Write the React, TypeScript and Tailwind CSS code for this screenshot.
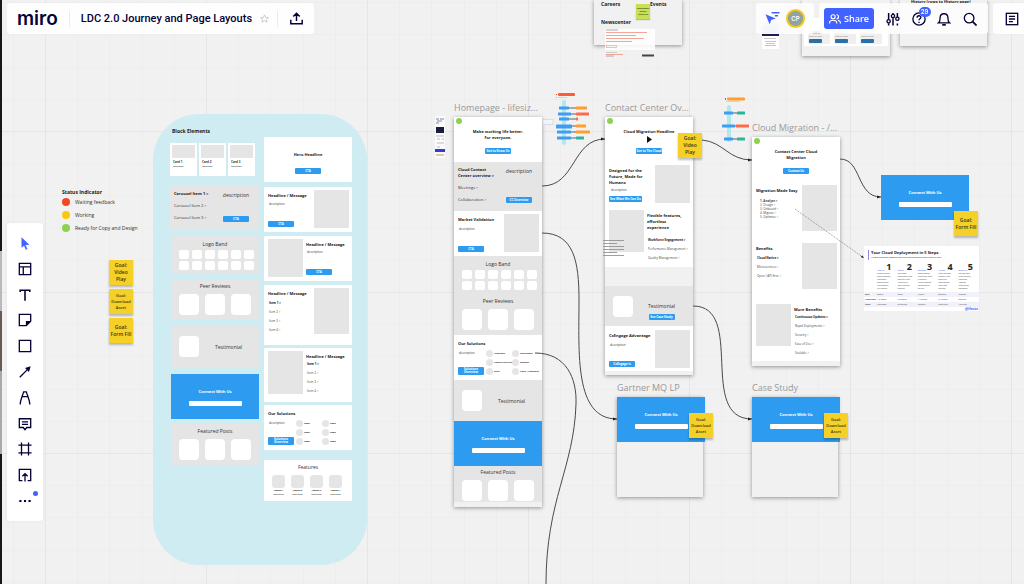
import type { ReactNode } from "react"
import clsx from "clsx"

type BoxProps = { className?: string; children?: ReactNode }

/* ---------- Board primitives ---------- */

function Cta({ children, className }: BoxProps) {
  return (
    <button
      className={clsx(
        "flex min-h-[6px] min-w-[26px] shrink-0 items-center justify-center rounded-[1px] bg-[#2d9bf0] px-px text-center text-[3px] leading-[4px] font-bold whitespace-nowrap text-white",
        className
      )}
    >
      {children}
    </button>
  )
}

function Media({ className }: BoxProps) {
  return <div className={clsx("w-[35px] shrink-0 bg-[#e5e5e5]", className)} />
}

function Title({ children, className }: BoxProps) {
  return <h3 className={clsx("text-[4px] leading-[6px] font-bold text-[#1a1a1a]", className)}>{children}</h3>
}

function Caption({ children, className }: BoxProps) {
  return <p className={clsx("text-[5px] leading-[6px] whitespace-nowrap text-[#333]", className)}>{children}</p>
}

function Tiny({ children, className }: BoxProps) {
  return <p className={clsx("text-[3px] leading-[4px] whitespace-nowrap text-[#333]", className)}>{children}</p>
}

function Items({ items }: { items: string[] }) {
  return (
    <ul className="flex flex-col gap-[5px] pl-px text-[3px] leading-[4px] whitespace-nowrap text-[#444]">
      {items.map((item, i) => (
        <li key={item} className={i === 0 ? "font-bold text-[#1a1a1a]" : ""}>
          {item} &gt;
        </li>
      ))}
    </ul>
  )
}

function Sticky({ children, className }: BoxProps) {
  return (
    <div
      className={clsx(
        "flex h-[25px] w-6 items-center justify-center bg-[#f5d128] text-center font-semibold whitespace-pre-line text-[#3b3413] shadow-[0_2px_2px_rgba(0,0,0,0.25)]",
        className
      )}
    >
      {children}
    </div>
  )
}

/* ---------- Wireframe blocks ---------- */

function Hero({ title, cta, className }: { title: string; cta: string; className?: string }) {
  return (
    <section className={clsx("flex h-[45px] flex-col items-center bg-white", className)}>
      <Title className="text-center whitespace-pre-line">{title}</Title>
      <Cta className="mt-auto mb-2">{cta}</Cta>
    </section>
  )
}

function Carousel({ first, rest, cta, className }: { first: string; rest: string[]; cta: string; className?: string }) {
  return (
    <section className={clsx("flex justify-between bg-[#e5e5e5] pr-[10px] pl-1", className)}>
      <div className="flex flex-col gap-[6px] text-[4px] leading-[6px] whitespace-pre text-[#333]">
        <p className="font-bold text-[#1a1a1a]">{first} &gt;</p>
        {rest.map((r) => (
          <p key={r}>{r} &gt;</p>
        ))}
      </div>
      <div className="flex flex-col items-center justify-between pt-px pb-2">
        <Caption>description</Caption>
        <Cta>{cta}</Cta>
      </div>
    </section>
  )
}

function LogoBand({ className }: BoxProps) {
  return (
    <section className={clsx("bg-[#e5e5e5] px-2", className)}>
      <Caption className="text-center">Logo Band</Caption>
      <div className="mt-[3px] grid grid-cols-[repeat(6,10px)] gap-x-[3px] gap-y-[2px]">
        {Array.from({ length: 12 }, (_, i) => (
          <div key={i} className="h-[9px] rounded-[2px] bg-white" />
        ))}
      </div>
    </section>
  )
}

function Squares({ title, className }: { title: string; className?: string }) {
  return (
    <section className={clsx("bg-[#e5e5e5] px-2", className)}>
      <Caption className="text-center">{title}</Caption>
      <div className="mt-[5px] flex gap-[6px]">
        {[0, 1, 2].map((i) => (
          <div key={i} className="h-[21px] w-5 rounded-[4px] bg-white" />
        ))}
      </div>
    </section>
  )
}

function Testimonial({ cta, className }: { cta?: string; className?: string }) {
  return (
    <section className={clsx("flex items-center bg-[#e5e5e5] pl-2", cta ? "pr-[18px]" : "pr-[17px]", className)}>
      <div className="h-[21px] w-5 rounded-[4px] bg-white" />
      <div className={clsx("ml-auto flex flex-col items-center gap-[5px]", cta && "pt-[10px]")}>
        <Caption>Testimonial</Caption>
        {cta && <Cta>{cta}</Cta>}
      </div>
    </section>
  )
}

function Connect({ className }: BoxProps) {
  return (
    <section className={clsx("flex h-[45px] w-[88px] flex-col items-center bg-[#2d9bf0] pt-[15px]", className)}>
      <h3 className="text-[4px] leading-[6px] font-bold text-white">Connect With Us</h3>
      <input aria-label="Connect With Us" className="mt-[6px] h-[5px] w-[53px] rounded-[1px] bg-white text-[3px]" />
    </section>
  )
}

type SplitProps = BoxProps & { reverse?: boolean; title: string; media: string }

// Copy on one side, grey media on the other
function Split({ reverse, title, media, className, children }: SplitProps) {
  return (
    <section className={clsx("flex justify-between bg-white pr-[3px] pl-1", className)}>
      {reverse && <Media className={media} />}
      <div className={clsx("flex w-[46px] flex-col items-start pt-[3px]", reverse && "pl-[3px]")}>
        <Title className="whitespace-pre">{title}</Title>
        {children}
      </div>
      {!reverse && <Media className={media} />}
    </section>
  )
}

function Solutions({ labels, className }: { labels: string[]; className?: string }) {
  return (
    <section className={clsx("flex h-[45px] flex-col bg-white px-1 pt-[6px]", className)}>
      <Title>Our Solutions</Title>
      <div className="flex gap-[2px]">
        <div className="flex w-[26px] flex-col justify-between pt-1">
          <Tiny className="pl-px">description</Tiny>
          <Cta className="h-2">
            <span className="leading-[3px] whitespace-pre-line">{"Solutions\nOverview"}</span>
          </Cta>
        </div>
        <ul className="grid grid-cols-2 gap-y-[2px] pt-[3px] text-[2px] leading-[7px] font-bold text-[#222]">
          {labels.map((l, i) => (
            <li key={i} className="flex w-[26px] gap-px whitespace-nowrap">
              <span className="size-[7px] shrink-0 rounded-full bg-[#e5e5e5]" />
              {l}
            </li>
          ))}
        </ul>
      </div>
    </section>
  )
}

function Frame({ name, dot, className, children }: BoxProps & { name: string; dot?: boolean }) {
  return (
    <article className={clsx("absolute bg-[#f1f1f1] shadow-[0_1px_4px_rgba(0,0,0,0.4)]", className)}>
      <h2 className="absolute -top-4 left-0 text-[9px] leading-[14px] whitespace-nowrap text-[#999]">{name}</h2>
      {children}
      {dot && <span className="absolute top-px left-[2px] size-[6px] rounded-full bg-[#8fd14f]" />}
    </article>
  )
}

/* ---------- Board content ---------- */

function BlockLibrary() {
  const items = ["Item 1", "Item 2", "Item 3", "Item 4"]
  return (
    <div className="absolute top-[114px] left-[153px] h-[451px] w-[214px] rounded-[46px] bg-[#cfecf2] px-[18px] pt-[14px]">
      <h2 className="pl-px text-[5px] leading-[6px] font-bold text-[#1a1a1a]">Block Elements</h2>
      <div className="flex gap-[5px]">
        <div className="flex w-[88px] flex-col pt-[9px]">
          <div className="-ml-px flex gap-[2px]">
            {[1, 2, 3].map((n) => (
              <div key={n} className="h-[33px] w-[27px] bg-white p-[2px]">
                <div className="h-[13px] bg-[#e5e5e5]" />
                <Tiny className="mt-[2px] pl-px font-bold">Card {n}</Tiny>
                <p className="pl-px text-[2px] leading-[6px]">description</p>
              </div>
            ))}
          </div>
          <Carousel className="mt-[10px] -ml-px h-[44px] pt-[5px]" first="Carousel Item 1" rest={["Carousel Item 2", "Carousel Item 3"]} cta="CTA" />
          <LogoBand className="mt-[6px] h-[38px] pt-[5px]" />
          <Squares className="mt-[5px] h-[41px] pt-1" title="Peer Reviews" />
          <Testimonial className="mt-[6px] h-[41px]" />
          <Connect className="mt-[7px]" />
          <Squares className="mt-[5px] h-[41px] pt-1" title="Featured Posts" />
        </div>

        <div className="flex w-[88px] flex-col pt-[3px]">
          <Hero className="pt-[15px]" title="Hero Headline" cta="CTA" />
          <Split className="mt-[5px] h-[45px] pt-[3px]" title="Headline / Message" media="h-[38px]">
            <Tiny className="mt-[3px] pl-px">description</Tiny>
            <Cta className="mt-[15px]">CTA</Cta>
          </Split>
          <Split reverse className="mt-[4px] h-[45px] pt-[3px]" title="Headline / Message" media="h-[38px]">
            <Tiny className="mt-[2px] pl-px">description</Tiny>
            <Cta className="mt-[15px]">CTA</Cta>
          </Split>
          <Split className="mt-[4px] h-[60px] pt-[3px]" title="Headline / Message" media="h-[46px]">
            <div className="mt-1">
              <Items items={items} />
            </div>
          </Split>
          <Split reverse className="mt-[3px] h-[54px] pt-[3px]" title="Headline / Message" media="h-[43px]">
            <div className="mt-[2px]">
              <Items items={items} />
            </div>
          </Split>
          <Solutions className="mt-[3px]" labels={["Name", "Name", "Name", "Name", "Name", "Name"]} />
          <section className="mt-[10px] h-[41px] bg-white px-2 pt-1">
            <Caption className="text-center">Features</Caption>
            <div className="mt-[5px] flex gap-[6px] text-center text-[2px] leading-[4px]">
              {[1, 2, 3, 4].map((n) => (
                <div key={n} className="w-[13px]">
                  <div className="h-[13px] rounded-[3px] bg-[#e5e5e5]" />
                  <p className="pt-px font-bold">Feature {n}</p>
                  <p>description</p>
                </div>
              ))}
            </div>
          </section>
        </div>
      </div>
    </div>
  )
}

const statuses = [
  { label: "Waiting feedback", color: "bg-[#f24726]" },
  { label: "Working", color: "bg-[#fac710]" },
  { label: "Ready for Copy and Design", color: "bg-[#8fd14f]" },
]

function Legend() {
  return (
    <>
      <div className="absolute top-[188px] left-[62px] text-[5px] leading-[8px] whitespace-nowrap text-[#333]">
        <h2 className="font-bold text-[#1a1a1a]">Status Indicator</h2>
        <ul className="mt-[2px] flex flex-col gap-[5px]">
          {statuses.map((s) => (
            <li key={s.label} className="flex items-center gap-[5px]">
              <span className={clsx("size-2 rounded-full", s.color)} />
              {s.label}
            </li>
          ))}
        </ul>
      </div>
      <div className="absolute top-[260px] left-[109px] flex flex-col gap-[4px]">
        <Sticky className="text-[5px] leading-[7px]">{"Goal:\nVideo\nPlay"}</Sticky>
        <Sticky className="text-[4px] leading-[6px]">{"Goal:\nDownload\nAsset"}</Sticky>
        <Sticky className="text-[5px] leading-[7px]">{"Goal:\nForm Fill"}</Sticky>
      </div>
    </>
  )
}

function HomepageFrame() {
  return (
    <Frame name="Homepage - lifesiz..." dot className="top-[117px] left-[454px] w-[88px] pb-[5px]">
      <Hero className="pt-[12px]" title={"Make working life better.\nFor everyone."} cta="Get to Know Us" />
      <Carousel
        className="h-[49px] pt-[5px]"
        first={"Cloud Contact\nCenter overview"}
        rest={["Meetings", "Collaboration"]}
        cta="CC Overview"
      />
      <Split className="h-[45px] pt-[3px]" title="Market Validation" media="h-[38px]">
        <Tiny className="mt-[4px] pl-px">description</Tiny>
        <Cta className="mt-[15px]">CTA</Cta>
      </Split>
      <LogoBand className="h-[40px] pt-[5px]" />
      <Squares className="h-[39px] pt-[2px]" title="Peer Reviews" />
      <Solutions labels={["Healthcare", "Government", "Financial Services", "Software", "Retail", "Travel / Hospitality"]} />
      <Testimonial className="h-[41px]" />
      <Connect />
      <Squares className="h-[36px] pt-[3px]" title="Featured Posts" />
    </Frame>
  )
}

function ContactCenterFrame() {
  return (
    <Frame name="Contact Center Ov..." dot className="top-[117px] left-[605px] w-[88px] pb-[4px]">
      <section className="flex h-[43px] flex-col items-center bg-white pt-[12px]">
        <Title>Cloud Migration Headline</Title>
        <svg className="mt-px h-[7px] w-[5px]" viewBox="0 0 5 7">
          <path d="M0 0 L5 3.5 L0 7 Z" fill="#111" />
        </svg>
        <Cta className="mt-[5px]">Get to The Cloud</Cta>
      </section>
      <Split className="h-[47px] pt-[5px]" title={"Designed for the\nFuture, Made for\nHumans"} media="h-[38px]">
        <Tiny className="mt-[2px] pl-[2px]">description</Tiny>
        <Cta className="mt-[4px]">See What We Can Do</Cta>
      </Split>
      <Split reverse className="h-[60px] pt-[3px]" title={"Flexible features,\neffortless\nexperience"} media="h-[42px]">
        <div className="mt-[7px]">
          <Items items={["Workforce Engagement", "Performance Management", "Quality Management"]} />
        </div>
      </Split>
      <Testimonial className="mt-[19px] h-[40px]" cta="See Case Study" />
      <Split className="h-[45px] pt-[4px]" title="CxEngage Advantage" media="h-[38px]">
        <Tiny className="mt-[4px] pl-px">description</Tiny>
        <Cta className="mt-[14px]">CxEngage is</Cta>
      </Split>
    </Frame>
  )
}

function CloudMigrationFrame() {
  return (
    <Frame name="Cloud Migration - /..." dot className="top-[137px] left-[752px] w-[88px] pb-[5px]">
      <Hero className="pt-[12px]" title={"Contact Center Cloud\nMigration"} cta="Contact Us" />
      <Split className="h-[54px] pt-[3px]" title="Migration Made Easy" media="h-[46px]">
        <ol className="mt-[5px] list-inside list-decimal pl-1 text-[3px] leading-[4px] text-[#444]">
          <li className="font-bold">Analyze &gt;</li>
          <li>Design &gt;</li>
          <li>Onboard &gt;</li>
          <li>Migrate &gt;</li>
          <li>Optimize &gt;</li>
        </ol>
      </Split>
      <Split className="h-[63px] pt-[7px]" title="Benefits" media="h-[46px]">
        <div className="mt-1">
          <Items items={["Cloud Native", "Microservices", "Open / API-first"]} />
        </div>
      </Split>
      <Split reverse className="h-[62px] pt-[5px]" title="More Benefits" media="h-[42px]">
        <div className="mt-[2px]">
          <Items items={["Continuous Updates", "Rapid Deployments", "Security", "Ease of Use", "Scalable"]} />
        </div>
      </Split>
    </Frame>
  )
}

const steps = [
  ["Analyze", "Record needs", "Requirements", "Processes", "Define goals", "Pick owners", "Next steps"],
  ["Design", "Call flows", "Integration plan", "Routing rules", "Agent skills", "User training", "Reports"],
  ["Onboard", "Setup tenant", "Users and roles", "Numbers", "Agent desktop", "Connections", "Go-live"],
  ["Migrate", "Move queues", "Cutover plan", "Test calls", "Data import", "Port lines", "Sign-off"],
  ["Optimize", "Review data", "Tune routing", "Coaching", "Insights", "Scale seats", "Roadmap"],
]

const stepRows = [
  ["Role", "Owner", "Team", "Admin", "Engineer", "Support"],
  ["Timeframe", "1-2 weeks", "2-3 weeks", "1-2 weeks", "3-4 weeks", "Ongoing"],
  ["Tools", "Workshop", "Blueprints", "Console", "Test plans", "Analytics"],
]

function StepsSlide() {
  return (
    <section className="absolute top-[246px] left-[864px] w-[115px] bg-white pt-1 text-[2px] leading-[3px] text-[#444]">
      <div className="ml-1 border-l border-[#8a8de8] pl-[2px]">
        <h3 className="text-[4px] leading-[6px] font-bold text-[#1a1a1a]">Your Cloud Deployment in 5 Steps</h3>
        <p className="leading-[4px] font-semibold">A cloud migration roadmap with clear deliverables at every point in time</p>
      </div>
      <div className="mt-[2px] ml-[13px] grid grid-cols-5">
        {steps.map(([name, ...lines], i) => (
          <div key={name} className="whitespace-nowrap">
            <div className="flex h-[10px] items-end justify-between pr-[6px]">
              <span className="text-[#4b5be8]">{name}</span>
              <span className="text-[9px] leading-[10px] font-bold text-[#222]">{i + 1}</span>
            </div>
            {lines.map((l) => (
              <p key={l}>{l}</p>
            ))}
          </div>
        ))}
      </div>
      <table className="mt-[2px] w-full table-fixed text-left">
        <tbody>
          {stepRows.map(([head, ...cells]) => (
            <tr key={head} className="h-[5px] odd:bg-[#f1f1fa]">
              <th className="w-[13px] pl-px font-bold">{head}</th>
              {cells.map((c) => (
                <td key={c}>{c}</td>
              ))}
            </tr>
          ))}
        </tbody>
      </table>
      <p className="pr-px text-right text-[3px] leading-[4px] font-bold text-[#4262ff]">@lifesize</p>
    </section>
  )
}

// Small site map thumbnails
function MiniMaps() {
  const left = [
    { y: 108, x: 559, w: 10, c: "#ff9d2e", r: 11 },
    { y: 114, x: 558, w: 13, c: "#ff6a4d", r: 13 },
    { y: 119, x: 559, w: 10, c: "#ff6a4d", r: 2 },
    { y: 126, x: 556, w: 16, c: "#ff9d2e", r: 10 },
    { y: 132, x: 557, w: 14, c: "#ff9d2e", r: 14 },
    { y: 138, x: 557, w: 14, c: "#2bb59a", r: 8 },
  ]
  const right = [
    { y: 113, x: 724, w: 9, c: "#2bb59a", r: 8 },
    { y: 126, x: 722, w: 13, c: "#ff6a4d", r: 13 },
    { y: 139, x: 724, w: 9, c: "#2bb59a", r: 8 },
  ]
  return (
    <g>
      <rect x="558" y="93" width="17" height="3" rx="1" fill="#ff5a3c" />
      <rect x="556" y="94" width="1" height="1" fill="#f24726" />
      <rect x="556" y="97" width="1" height="1" fill="#8fd14f" />
      <rect x="558" y="97" width="9" height="1" fill="#b7dde6" />
      <rect x="562" y="100" width="4" height="45" rx="2" fill="#b3e7ee" />
      {left.map((n) => (
        <g key={n.y}>
          <rect x={n.x} y={n.y - 1.5} width={n.w} height={n.y === 126 ? 4 : 3} rx="0.5" fill="#3d9df2" />
          <path d={`M${n.x + n.w} ${n.y} H576`} stroke="#222" strokeWidth="0.7" />
          <rect x="576" y={n.y - 1.5} width={n.r} height="3" rx="0.5" fill={n.c} />
        </g>
      ))}
      <rect x="543" y="119.5" width="10" height="5" fill="#f3f4f8" stroke="#ccd3e3" strokeWidth="0.7" />
      <rect x="727" y="97.5" width="18" height="3" rx="1" fill="#ff9d2e" />
      <rect x="725" y="98" width="1" height="2" fill="#f24726" />
      <rect x="726" y="101" width="14" height="1" fill="#b7dde6" />
      <rect x="727" y="105" width="4" height="37" rx="2" fill="#b3e7ee" />
      {right.map((n) => (
        <g key={n.y}>
          <rect x={n.x} y={n.y - 1.5} width={n.w} height="3" rx="0.5" fill="#3d9df2" />
          <path d={`M${n.x + n.w} ${n.y} H737`} stroke="#222" strokeWidth="0.7" />
          <rect x={n.r > 10 ? 736 : 737} y={n.y - 1.5} width={n.r} height="3" rx="0.5" fill={n.c} />
        </g>
      ))}
      {/* Full page thumbnail */}
      <rect x="435" y="116" width="10" height="42" fill="#fafafb" />
      <path d="M436 119h3m1 0h4m-7 2h5m-6 2h3" stroke="#7d86ad" strokeWidth="1" />
      <rect x="436" y="127" width="8" height="6" fill="#1b1b3a" />
      <path d="M436 136h8m-7 3h3m2 0h2m-7 4h7m-7 4h3" stroke="#bbb" strokeWidth="1" />
      <rect x="435" y="149" width="10" height="3" fill="#3b35e0" />
      <path d="M436 155h8" stroke="#b9a34d" strokeWidth="1" />
    </g>
  )
}

function Connectors() {
  return (
    <svg className="pointer-events-none absolute top-0 left-0" width="1024" height="584" fill="none">
      <defs>
        <marker id="tip" markerWidth="5" markerHeight="4" refX="4" refY="2" orient="auto">
          <path d="M0 0.5 L4 2 L0 3.5 Z" fill="#222" />
        </marker>
      </defs>
      <g stroke="#4a4a4a" strokeWidth="1">
        <path d="M542 186 C576 186 572 139 605 139" markerEnd="url(#tip)" />
        <path d="M542 233 C574 233 579 262 579 300 C579 352 574 419 617 419" markerEnd="url(#tip)" />
        <path d="M535 353 C566 353 577 378 576 404 C574 468 546 500 546 584" />
        <path d="M702 140 C724 142 728 160 752 160" markerEnd="url(#tip)" />
        <path d="M693 306 C746 306 697 419 752 419" markerEnd="url(#tip)" />
        <path d="M840 159 C862 159 856 197 881 197" markerEnd="url(#tip)" />
        <path d="M795 209 L864 258" stroke="#777" strokeDasharray="1 1" strokeWidth="0.8" markerEnd="url(#tip)" />
      </g>
      <path d="M603 240.5h21m-21 3h14m-14 3h21m-21 3h21m-21 3h14m-14 3h21" stroke="#888" strokeWidth="0.8" />
      <MiniMaps />
    </svg>
  )
}

function TopFrames() {
  return (
    <>
      <div className="absolute top-0 left-[594px] h-[45px] w-[88px] bg-[#f1f1f1] pl-[7px] text-[5px] leading-[8px] font-bold text-[#1a1a1a] shadow-[0_1px_4px_rgba(0,0,0,0.4)]">
        <div className="grid grid-cols-[49px_auto]">
          <span>Careers</span>
          <span>Events</span>
        </div>
        <p className="mt-[10px]">Newscenter</p>
      </div>
      <div className="absolute top-[4px] left-[636px] flex h-[15px] w-[14px] items-center bg-[#c9df56] text-center text-[2px] leading-[3px] font-bold text-[#3a4210] shadow-[0_1px_1px_rgba(0,0,0,0.25)]">
        Integrations places resources
      </div>
      <svg className="absolute top-[28px] left-[605px]" width="50" height="30" fill="none">
        <rect y="1" width="50" height="21" fill="#fff" fillOpacity="0.85" />
        <path d="M1 2h12m-12 26h8" stroke="#aaa" />
        <path d="M1 4.5h41M1 7.5h30M1 10.5h38M1 13.5h26M1 26.5h17" stroke="#f3a597" />
        <rect x="1.5" y="17.5" width="10" height="2" stroke="#f3a597" strokeWidth="0.7" />
        <path d="M1 24.5h11" stroke="#ccc" />
        <path d="M37 27.5h12" stroke="#444" strokeWidth="2" />
      </svg>

      <svg className="absolute top-[24px] left-[762px]" width="17" height="25" fill="none">
        <rect width="17" height="25" fill="#fff" />
        <rect width="17" height="10" fill="#c9cbdc" />
        <rect y="10" width="17" height="2" fill="#1d1f52" />
        <path d="M2 14.5h12m-11 3h11m-10 2h9m-10 2h11" stroke="#b5b5bd" strokeWidth="0.8" />
      </svg>

      <div className="absolute top-0 left-[802px] h-[56px] w-[88px] bg-[#f1f1f1] shadow-[0_1px_4px_rgba(0,0,0,0.4)]">
        <div className="mx-[2px] mt-[18px] flex h-[28px] items-end gap-1 bg-white px-1 pb-[2px]">
          {[0, 1, 2].map((i) => (
            <div key={i} className="h-[13px] w-[22px] bg-[#f1eeee] px-px pt-px text-[2px] leading-[3px] text-[#777]">
              Read the latest product news
              <div className="mt-px h-[4px] w-[13px] rounded-[1px] bg-[#2a6fa5]" />
            </div>
          ))}
        </div>
      </div>
      <div className="absolute top-0 left-[900px] h-[46px] w-[87px] bg-[#f1f1f1] pl-[11px] shadow-[0_1px_4px_rgba(0,0,0,0.4)]">
        <p className="text-[4px] leading-[4px] font-bold whitespace-nowrap text-[#1a1a1a]">History (rows to History page)</p>
      </div>
    </>
  )
}

function Board() {
  return (
    <main className="absolute inset-0 overflow-hidden bg-[#f1f1f1] font-['Open_Sans',sans-serif]">
      <svg className="absolute inset-0 size-full">
        <defs>
          <pattern id="grid" x="45" y="131" width="161" height="161" patternUnits="userSpaceOnUse">
            <path d="M32.5 0V161M64.5 0V161M97.5 0V161M129.5 0V161M0 32.5H161M0 64.5H161M0 97.5H161M0 129.5H161" stroke="#ededed" />
            <path d="M0.5 0V161M0 0.5H161" stroke="#e6e6e6" />
          </pattern>
        </defs>
        <rect width="100%" height="100%" fill="url(#grid)" />
      </svg>
      <TopFrames />
      <Legend />
      <BlockLibrary />
      <HomepageFrame />
      <ContactCenterFrame />
      <CloudMigrationFrame />
      <Frame name="Gartner MQ LP" className="top-[397px] left-[617px] h-[100px] w-[86px]">
        <Connect />
      </Frame>
      <Frame name="Case Study" className="top-[397px] left-[752px] h-[100px] w-[86px]">
        <Connect />
      </Frame>
      <Connect className="absolute top-[175px] left-[881px]" />
      <StepsSlide />
      <Connectors />
      <Sticky className="absolute top-[133px] left-[678px] text-[5px] leading-[7px]">{"Goal:\nVideo\nPlay"}</Sticky>
      <Sticky className="absolute top-[413px] left-[689px] text-[4px] leading-[6px]">{"Goal:\nDownload\nAsset"}</Sticky>
      <Sticky className="absolute top-[413px] left-[824px] text-[4px] leading-[6px]">{"Goal:\nDownload\nAsset"}</Sticky>
      <Sticky className="absolute top-[211px] left-[954px] text-[5px] leading-[7px]">{"Goal:\nForm Fill"}</Sticky>
    </main>
  )
}

/* ---------- Chrome ---------- */

function Glyph({ children, className }: BoxProps) {
  return (
    <svg className={clsx("shrink-0", className)} viewBox="0 0 16 16" fill="none" stroke="currentColor" strokeWidth="1.5">
      {children}
    </svg>
  )
}

function Header() {
  return (
    <header className="absolute top-[3px] right-0 left-[7px] flex justify-between font-['Inter',sans-serif] text-[#050038]">
      <div className="flex h-[31px] items-center rounded-[3px] bg-white/90 pr-[11px] pl-[10px]">
        <a href="#" className="text-[19px] leading-6 font-semibold">miro</a>
        <span className="mx-[11px] h-4 w-px bg-[#e9e9ee]" />
        <h1 className="font-['Roboto',sans-serif] text-[11px] leading-4 font-medium whitespace-nowrap">LDC 2.0 Journey and Page Layouts</h1>
        <button aria-label="Add to favourites" className="ml-2 text-[#c3c2cf]">
          <Glyph className="size-[9px]">
            <path d="M8 1.5 10 6.2 15 6.5 11.2 9.7 12.4 14.6 8 12 3.6 14.6 4.8 9.7 1 6.5 6 6.2Z" />
          </Glyph>
        </button>
        <span className="mr-3 ml-2 h-4 w-px bg-[#e9e9ee]" />
        <button aria-label="Export board">
          <Glyph className="size-[13px]">
            <path d="M1 9.5V14.5H15V9.5M8 11V1.5M4 5.5 8 1.5 12 5.5" strokeWidth="1.8" />
          </Glyph>
        </button>
      </div>

      <div className="flex h-[31px] gap-[5px]">
        <div className="flex w-[58px] items-center justify-between rounded-[3px] bg-white/80 px-[9px] backdrop-blur-[2px]">
          <button aria-label="Follow cursors" className="text-[#4262ff]">
            <Glyph className="size-[15px]">
              <path d="M0.5 3.5 11.5 8 6.5 9.5 5 14.5Z" fill="currentColor" stroke="none" />
              <path d="M7 1.8H15.5M10.5 5H14" />
            </Glyph>
          </button>
          <span className="flex size-[19px] items-center justify-center rounded-full border-2 border-[#f2c81f] bg-[#8fa3a0] text-[6px] font-semibold text-white">
            CP
          </span>
        </div>
        <div className="flex w-[169px] items-center rounded-[3px] bg-white/80 pr-[11px] pl-[5px] backdrop-blur-[2px]">
          <button className="flex h-[21px] w-[50px] items-center justify-center gap-[3px] rounded-[3px] bg-[#4262ff] font-['Open_Sans',sans-serif] text-[9px] font-semibold text-white">
            <Glyph className="size-3">
              <circle cx="5.5" cy="5" r="2.7" />
              <path d="M0.8 14V12.5C0.8 10.5 3 9.6 5.5 9.6S10.2 10.5 10.2 12.5V14M10 2.3A2.7 2.7 0 0 1 10 7.7M12 9.8C14 10.2 15.2 11 15.2 12.5V14" />
            </Glyph>
            Share
          </button>
          <div className="ml-3 flex flex-1 items-center justify-between">
            <button aria-label="Board settings">
              <Glyph className="size-[14px]">
                <path d="M3 1V8.5M3 13V15.5M8 1V2.5M8 7V15.5M13 1V8.5M13 13V15.5" strokeWidth="1.7" />
                <circle cx="3" cy="10.7" r="1.9" />
                <circle cx="8" cy="4.7" r="1.9" />
                <circle cx="13" cy="7.7" r="1.9" fill="white" />
              </Glyph>
            </button>
            <button aria-label="Help" className="relative">
              <Glyph className="size-[14px]">
                <circle cx="8" cy="8" r="7" />
                <path d="M5.8 6.5C5.8 3.5 10.2 3.7 10.2 6.2C10.2 7.8 8 7.8 8 9.5" />
                <path d="M8 11V12.7" />
              </Glyph>
              <span className="absolute -top-[5px] left-[7px] flex h-[10px] w-3 items-center justify-center rounded-full bg-[#4262ff] text-[6px] leading-none font-semibold text-white">
                29
              </span>
            </button>
            <button aria-label="Notifications">
              <Glyph className="size-[14px]">
                <path d="M1.5 12.5H14.5C13 11.5 12.5 10 12.5 7C12.5 4 10.8 2 8 2S3.5 4 3.5 7C3.5 10 3 11.5 1.5 12.5Z" />
                <path d="M6 14.7H10" strokeWidth="2" />
              </Glyph>
            </button>
            <button aria-label="Search">
              <Glyph className="size-[14px]">
                <circle cx="7" cy="7" r="5.5" />
                <path d="M11 11 15.5 15.5" strokeWidth="2" />
              </Glyph>
            </button>
          </div>
        </div>
        <div className="flex w-[31px] items-center rounded-l-[3px] bg-white/90 pl-3">
          <button aria-label="Notes">
            <Glyph className="size-[14px]">
              <rect x="1.5" y="1.5" width="13" height="13" />
              <path d="M4.5 5H11.5M4.5 8H11.5M4.5 11H9" />
            </Glyph>
          </button>
        </div>
      </div>
    </header>
  )
}

const tools = [
  { label: "Select", icon: <path d="M4 1.5 13 10 8.5 10.2 10.8 14.8 9 15.6 6.9 11 4 13.5Z" fill="#4262ff" stroke="none" /> },
  { label: "Templates", icon: <path d="M1.5 1.5H14.5V14.5H1.5ZM1.5 5.5H14.5M6 5.5V14.5" /> },
  { label: "Text", icon: <path d="M2.5 4.5V2.5H13.5V4.5M8 2.5V14.5" strokeWidth="1.8" /> },
  {
    label: "Sticky note",
    icon: (
      <>
        <path d="M1.5 1.5H14.5V9.5L9.5 14.5H1.5Z" />
        <path d="M9 9H15L9 15Z" fill="currentColor" stroke="none" />
      </>
    ),
  },
  { label: "Shape", icon: <path d="M1.5 1.5H14.5V14.5H1.5Z" /> },
  {
    label: "Connection line",
    icon: (
      <>
        <path d="M2 14 11 5" />
        <path d="M14.5 1.5 12.5 8 8 3.5Z" fill="currentColor" stroke="none" />
      </>
    ),
  },
  { label: "Pen", icon: <path d="M2.5 15.5C2.5 10.5 4.5 7 6.5 1H9.5C11.5 7 13.5 10.5 13.5 15.5M5.2 6.5H10.8" /> },
  { label: "Comment", icon: <path d="M1.5 2H14.5V12H10L8 14.5 6 12H1.5ZM4.5 5.5H11.5M4.5 8.5H11.5" /> },
  { label: "Frame", icon: <path d="M4 0.5V15.5M12 0.5V15.5M0.5 3.5H15.5M0.5 12.5H15.5" /> },
  { label: "Upload", icon: <path d="M5 14.5H1.5V1.5H14.5V14.5H11M8 15.5V6.5M5 9.5 8 6.5 11 9.5" /> },
  { label: "More", icon: <path d="M1.5 8H4M6.8 8H9.2M12 8H14.5" strokeWidth="2.4" /> },
]

function Toolbar() {
  return (
    <nav className="absolute top-[223px] left-[7px] flex h-[298px] w-9 flex-col items-center justify-between rounded-[3px] bg-white py-2 text-[#050038] shadow-[0_0_3px_rgba(0,0,0,0.06)]">
      {tools.map((t) => (
        <button key={t.label} aria-label={t.label} className="relative flex size-6 items-center justify-center">
          <Glyph className="size-[14px]">{t.icon}</Glyph>
          {t.label === "More" && <span className="absolute top-[2px] left-5 size-[5px] rounded-full bg-[#4262ff]" />}
        </button>
      ))}
    </nav>
  )
}

export default function App() {
  return (
    <div className="relative h-screen w-full overflow-hidden">
      <Board />
      {/* Edge of the window behind */}
      <div className="absolute inset-y-0 left-0 flex w-[2px] flex-col bg-[#17171a]">
        <div className="mt-[251px] h-[60px] bg-[#b9b9bb]" />
        <div className="h-[60px] bg-[#6b5a52]" />
        <div className="h-[83px] bg-[#a9a9ab]" />
      </div>
      <Header />
      <Toolbar />
    </div>
  )
}
